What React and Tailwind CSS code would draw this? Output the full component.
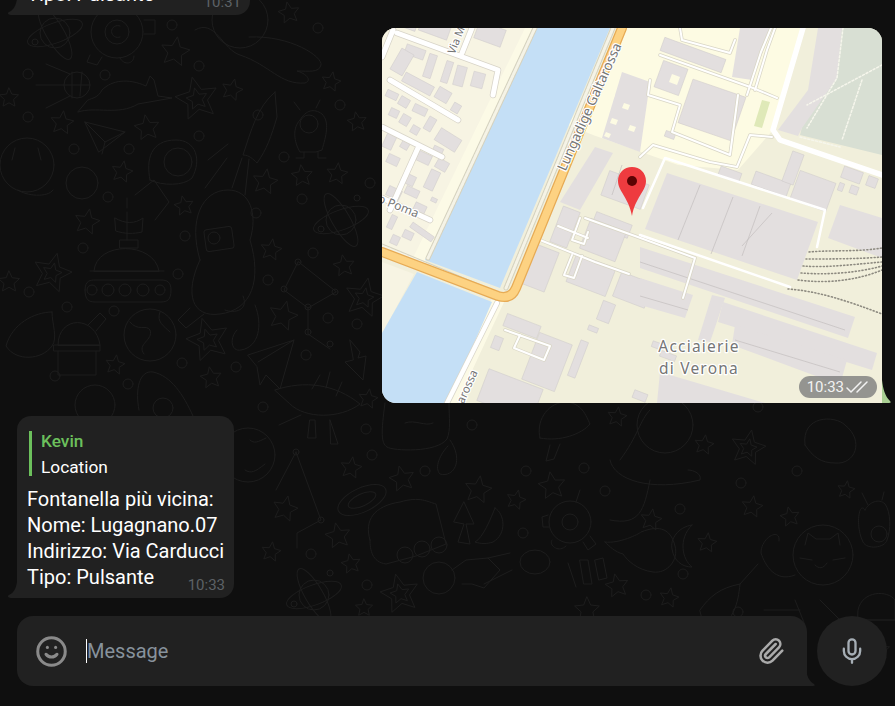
import { Mic, Paperclip, Smile } from 'lucide-react';

const starPts = (cx, cy, r, rot = 0) => {
  const pts = [];
  for (let i = 0; i < 10; i++) {
    const a = ((-90 + rot + i * 36) * Math.PI) / 180;
    const d = i % 2 === 0 ? r : r * 0.48;
    pts.push(`${(cx + d * Math.cos(a)).toFixed(1)},${(cy + d * Math.sin(a)).toFixed(1)}`);
  }
  return pts.join(' ');
};

// x, y, radius, rotation, double outline
const stars = [
  [175, 52, 15, 10], [197, 99, 22, -12, 1], [232, 90, 11, 15], [9, 98, 10, 0], [62, 123, 12, 8],
  [147, 128, 13, -8], [122, 172, 11, 12], [265, 182, 13, 10], [302, 176, 11, -5], [337, 174, 11, 8],
  [289, 13, 11, -10], [331, 82, 10, 12], [357, 122, 10, -8], [87, 222, 13, 12], [184, 206, 10, -10],
  [52, 273, 20, 15, 1], [9, 282, 11, 0], [271, 250, 11, 10], [344, 266, 11, -8], [364, 298, 20, 12, 1],
  [283, 316, 15, 15], [208, 340, 22, -15, 1], [115, 365, 10, 10], [211, 378, 11, -8], [368, 399, 10, 10],
  [351, 468, 11, 10], [285, 509, 13, 14], [402, 479, 13, -12], [478, 490, 14, 10], [516, 500, 10, 15],
  [552, 486, 14, -8], [617, 417, 10, 10], [338, 536, 13, -10], [271, 552, 10, 10], [351, 564, 10, -10],
  [400, 594, 20, -12, 1], [651, 520, 11, 10], [707, 543, 10, 8], [617, 586, 12, -10], [669, 598, 10, 12],
  [364, 608, 9, 0], [587, 610, 13, 0], [704, 445, 10, 10], [748, 448, 18, 12, 1],
  [752, 507, 11, 10], [790, 517, 10, -10], [846, 490, 9, 10], [880, 650, 10, 0],
];

const dots = [
  [172, 25], [199, 66], [105, 75], [28, 74], [28, 117], [199, 136], [129, 149], [74, 149], [258, 115],
  [284, 157], [340, 105], [318, 28], [370, 183], [108, 197], [83, 248], [29, 292], [67, 307], [114, 311],
  [185, 236], [178, 274], [256, 213], [302, 199], [268, 280], [313, 253], [328, 318], [357, 324], [306, 355],
  [236, 367], [182, 363], [55, 376], [128, 384], [263, 407], [366, 429], [372, 455], [472, 425], [425, 471],
  [526, 471], [584, 468], [605, 491], [680, 509], [523, 533], [311, 554], [367, 585], [683, 574], [646, 595],
  [741, 483], [797, 471], [738, 612], [758, 407],
];

const Atom = ({ x, y }) => (
  <g>
    <circle cx={x} cy={y} r="15" />
    <ellipse cx={x} cy={y} rx="29" ry="10" transform={`rotate(-20 ${x} ${y})`} />
    <ellipse cx={x} cy={y} rx="30" ry="9" transform={`rotate(60 ${x} ${y})`} />
    <circle cx={x - 20} cy={y + 9} r="3" />
    <circle cx={x + 16} cy={y - 22} r="3" />
  </g>
);

const Wallpaper = () => (
  <svg className="absolute inset-0" width="895" height="706" fill="none" stroke="#1d1d1d" strokeWidth="1" strokeLinejoin="round" strokeLinecap="round">
    {stars.map(([x, y, r, rot, dbl], i) => (
      <g key={i}>
        <polygon points={starPts(x, y, r, rot)} />
        {dbl && <polygon points={starPts(x, y, r * 0.5, rot)} />}
      </g>
    ))}
    {dots.map(([x, y], i) => (
      <circle key={i} cx={x} cy={y} r="5" />
    ))}
    <Atom x={55} y={33} />
    <Atom x={341} y={220} />
    <Atom x={314} y={595} />
    {/* eye creature top */}
    <circle cx="117" cy="32" r="26" />
    <circle cx="117" cy="32" r="12" />
    <path d="M120 26a6 6 0 1 0 0 11M144 20h11v14h-11M90 55l-3 7 10 3 5-8M120 58c4 8 14 6 14-2" />
    {/* sputnik */}
    <circle cx="77" cy="85" r="13" />
    <path d="M36 85h54M46 64l24 10M46 108l24-12M72 72v26M82 72l-2 24" />
    {/* cat, upper */}
    <circle cx="240" cy="20" r="28" />
    <path d="M195 30c20-12 28 20 45 25 30 10 40 30 65 28 8-3 0-10-8-12 12 0 22 2 24-6 2-8-30-30-72-28" />
    {/* glider */}
    <path d="M78 112c18-6 40 4 60-8l34-6-14-2-4-16-4-4-4 10c-18-8-34-6-44 4-4 8-10 8-14 10z" />
    {/* rocket */}
    <path d="M275 92l2 25c-6 20-10 32-20 46-4-4-8-8-14-8 8-24 14-48 32-63z" />
    <path d="M208 160l20-16M205 188l22-30M232 188l10-30M245 195l4-36" />
    {/* paper plane */}
    <path d="M85 122l40 10-26 20zM85 122l20 20 20-10M105 142l-3 12" />
    {/* alien */}
    <path d="M300 120c-8 8-6 22 0 32h16l6-2c4-14 8-28 0-36-8-6-16-4-22 6z" />
    <circle cx="309" cy="124" r="9" />
    <path d="M300 110l-6-8M316 108l4-8M304 152v6h-8M318 152v6h8" />
    {/* helmet */}
    <path d="M150 180c-4-20 0-40 26-40 20 0 26 20 16 38-8 8-30 8-42 2z" />
    <circle cx="178" cy="162" r="14" />
    {/* cat, left */}
    <circle cx="27" cy="165" r="27" />
    <path d="M15 148l-3 12M38 148l3 12M18 190c8 6 30 8 35 0" />
    <circle cx="82" cy="183" r="16" />
    {/* lander */}
    <path d="M94 271c2-30 60-30 65 0zM90 271h74M85 290c0-10 6-10 10-10h66c6 0 10 2 10 10 0 10-4 12-10 12H95c-6 0-10-2-10-12z" />
    <circle cx="92" cy="290" r="5" />
    <circle cx="108" cy="290" r="6" />
    <circle cx="125" cy="290" r="6" />
    <circle cx="143" cy="290" r="6" />
    <circle cx="160" cy="290" r="5" />
    <path d="M127 240v-28M115 218c10 6 20 6 28 0l-1 14c-8 2-18 2-26-1zM120 240h18v8h-18zM127 208v-10" />
    <path d="M135 195l19-15 15 22-14 18" />
    {/* fat cat with camera */}
    <path d="M200 260c-12-40 2-70 28-70 22 0 30 24 22 50 12 40 2 70-30 74-28 4-36-20-20-54z" />
    <rect x="205" y="228" width="28" height="22" rx="3" transform="rotate(-8 219 239)" />
    <circle cx="214" cy="238" r="6" />
    <path d="M190 308l-12 12 8 8 18-14M225 310c10 4 24 0 18-14M255 305c8 20 4 42-14 45-10 2-12-12-4-20" />
    {/* constellation */}
    <path d="M298 262l-14 28 24 18 28-16zM308 308v26l22 15" />
    <circle cx="298" cy="262" r="3" />
    <circle cx="284" cy="289" r="3" />
    <circle cx="308" cy="307" r="3" />
    <circle cx="335" cy="292" r="3" />
    <circle cx="308" cy="332" r="3" />
    <circle cx="330" cy="344" r="3" />
    {/* paper plane 2, arrow */}
    <path d="M248 355l46-15-14 49-14-14-6 10-3-18zM258 362l36-22M350 340l10 12-2 6 8-2-3 24-18-18 8-2z" />
    {/* ufo, observatory, earth */}
    <path d="M52 312c-18 0-40 12-46 34 10 16 36 14 46 0 6-8 0-22 0-34z" />
    <path d="M58 345c0-30 38-30 42 0zM54 345h46v6H54zM58 351v24h38v-24" />
    <path d="M88 325l12-12 6 6-10 12" />
    <circle cx="150" cy="335" r="26" />
    <path d="M130 322c8 10 16 2 20 8 4 10-14 14-6 24M160 312c-4 10 4 14 10 20" />
    {/* planet with ring, rocket */}
    <circle cx="95" cy="405" r="20" />
    <path d="M139 410c-4-20 0-40 14-38 18 4 30 22 40 44" />
    <circle cx="163" cy="408" r="10" />
    {/* ufo with legs */}
    <path d="M275 390c30-10 60-6 85 14-20 15-55 15-70 0zM320 375l-8 14M330 372l-4 16M342 382l-6 14" />
    <path d="M310 420h5l1 18h-8zM330 420l8 24h-7zM279 425l22-10" />
    {/* planet with eyes */}
    <circle cx="248" cy="455" r="27" />
    <path d="M250 440c4 4 8 2 16-2M245 470c6 4 10 2 20-6" />
    <circle cx="296" cy="452" r="3" />
    <circle cx="321" cy="520" r="3" />
    <path d="M296 452l25 68-24 13v15M296 452l-20 38" />
    {/* fat cat lower */}
    <path d="M385 403c-4 30-4 40 2 44 6 4 50 6 60-8 4-10 2-20 2-36" />
    <path d="M405 423c10-4 20 4 28 0M450 440c14 20 4 38-10 34-6-6 0-20 8-28" />
    {/* galaxy */}
    <ellipse cx="362" cy="500" rx="26" ry="12" transform="rotate(-25 362 500)" />
    <ellipse cx="362" cy="500" rx="15" ry="6" transform="rotate(-25 362 500)" />
    {/* truck */}
    <path d="M370 540c-6-20 4-34 30-38 20-6 28 0 36 2l10 40-30 12-30 8c-14-2-16-14-16-24z" />
    <circle cx="405" cy="555" r="8" />
    <circle cx="422" cy="549" r="8" />
    <circle cx="439" cy="545" r="8" />
    <path d="M464 502l10 22-8 0 4 20-12-2 6-18-10-2z" />
    <path d="M495 508c10 6 12 26-2 34-6 2-12 2-18 0 8-4 16-24 20-34z" />
    {/* spaceship */}
    <circle cx="439" cy="578" r="16" />
    <path d="M452 570l14-10 22-2 12 12-16 18-12-4h-10M488 558l22-5M484 584l28-14" />
    {/* cat lower right */}
    <circle cx="665" cy="425" r="28" />
    <path d="M620 460c18-24 20-40 30-50M610 460c4 20 40 32 90 20 2-6-6-10-12-10M610 520c30 6 34-10 40-40" />
    {/* ufo with hat */}
    <path d="M540 438c-4-16 6-34 24-36 18 0 22 14 26 22-8 10-30 18-50 14z" />
    <path d="M550 445l-4 16 8-2 6-15" />
    {/* eye bot lower */}
    <circle cx="570" cy="522" r="21" />
    <circle cx="570" cy="522" r="8" />
    <path d="M548 515l-6 2 1 10h6M590 536l6 8-8 6-5-8M552 540c-4 4 6 14 14 6M580 490l-4 12" />
    {/* comet, moons */}
    <path d="M605 542c14 2 34-8 36-10 20-8 30-2 34 14 4 14-8 28-22 26-16-2-26-12-30-18-8-2-14-8-18-12z" />
    <path d="M692 525c-14 2-22 14-20 24 2 12 10 18 20 18-10-8-14-28 0-42z" />
    <path d="M568 563l8 24M580 560h8l4 24h-8zM595 560l8-2 4 20-8 2z" />
    <ellipse cx="535" cy="562" rx="15" ry="12" />
    {/* cat in helmet, right */}
    <circle cx="823" cy="555" r="30" />
    <path d="M805 545l3-12 8 6h14l8-6 2 12M800 558l12 2M845 558l-12 2M815 565c4 4 8 4 12-2M795 575c-20 8-30-10-34-22 0-16 20-26 18-12M795 600l10 25M820 600l20 20M800 610h-36" />
    {/* alien right */}
    <path d="M865 510c-6-10-10 16-2 32 4 8 22 6 24-2 4-10 4-28-2-36-6-6-16-2-20 6z" />
    <circle cx="879" cy="534" r="8" />
    <path d="M868 505l-6-12M882 500l2-8" />
    {/* rocket lower right */}
    <path d="M700 610c10-14 20-22 40-26-2 20-6 34-22 46l-14-4zM740 584l18-20M706 625l-8 14" />
    {/* observatory right */}
    <path d="M858 610c4-20 30-20 37-10v20h-37zM856 620h39" />
    <path d="M805 445c-4-30 30-30 40-20 20 16 10 40-10 38-14 0-22-6-30-18z" />
  </svg>
);

const P = ({ d, f }) => <path d={d} fill={f} />;

// cx, cy, w, h, angle
const buildings = [
  [415, 52, 20, 10, 20], [430, 66, 8, 24, 18], [402, 62, 14, 24, 30], [447, 72, 7, 22, 18], [460, 76, 10, 20, 15],
  [478, 80, 12, 15, 15], [418, 84, 32, 10, 28], [443, 95, 14, 12, 30], [456, 108, 8, 9, 30], [392, 95, 12, 7, 25],
  [404, 102, 10, 9, 30], [420, 110, 14, 8, 25], [405, 120, 9, 10, 30], [394, 113, 9, 8, 25], [430, 124, 8, 14, 30],
  [448, 140, 24, 14, 32], [415, 130, 8, 8, 30], [390, 140, 10, 18, 25], [405, 145, 8, 8, 30], [438, 150, 10, 6, 25],
  [424, 158, 14, 10, 25], [442, 165, 12, 10, 30], [393, 160, 12, 9, 25],
  [410, 180, 10, 10, 25], [432, 180, 10, 20, 25], [412, 192, 14, 8, 25], [420, 208, 12, 8, 25], [394, 193, 14, 10, 25],
  [434, 200, 6, 4, 25], [392, 222, 6, 14, 25], [395, 240, 8, 9, 25], [408, 235, 10, 8, 25],
  [422, 232, 26, 6, 35], [410, 27, 12, 5, 20], [435, 28, 30, 15, 20], [490, 34, 28, 18, 20],
  [693, 55, 65, 14, 20], [671, 78, 26, 28, 20], [712, 110, 56, 46, 19], [852, 175, 20, 12, 20], [872, 182, 10, 10, 20],
  [813, 191, 38, 30, 20], [771, 184, 37, 14, 20], [793, 168, 12, 32, 20], [730, 174, 22, 9, 20], [841, 187, 5, 8, 20],
  [625, 190, 42, 26, 20], [612, 225, 38, 14, 21], [565, 227, 18, 38, 21], [603, 240, 38, 32, 21], [591, 275, 42, 30, 21],
  [540, 268, 25, 42, 21], [633, 290, 34, 26, 21], [606, 312, 13, 20, 21], [593, 329, 10, 5, 21], [522, 326, 36, 13, 21],
  [547, 362, 35, 50, 21], [578, 359, 8, 38, 21], [497, 343, 9, 13, 21], [510, 395, 58, 34, 21], [640, 396, 14, 8, 21],
  [670, 135, 10, 6, 20], [854, 190, 8, 8, 20], [656, 345, 8, 6, 20], [668, 356, 16, 6, 20],
];

const serviceRoads = [
  'M660 55l93 33 24 10',
  'M650 80l-2 15 32 10-8 27 58 23 8-60',
  'M640 157l13-12 57 17 27 5 13-32 22 2',
  'M680 28l2 12 48 13 5-13',
  'M755 90l12-40 8-22M747 95l14-43 10-24',
  'M585 218l50 18 60 22-12 40',
  'M540 240l55 22 34 12',
  'M572 255l-8 20 10 3 8-22M580 218l-8 22 12 4 4-12',
  'M505 330l45 16-6 14-30-12 6-13',
  'M558 226l30 12',
];

const MapImage = () => (
  <svg className="block" width="500" height="375" viewBox="382 28 500 375">
    <rect x="382" y="28" width="500" height="375" fill="#f1efdb" />
    <P d="M382 28h155L425 260l-43-10zM382 262l32 12-32 60z" f="#f7f4e3" />
    <P d="M525 28h14L425 262l-12-4zM505 300l-48 103h-16l50-103z" f="#fcfae6" />
    <P d="M625 28h178l-30 102-35 40-60-5-85-30-25-10z" f="#fdfbe3" />
    <P d="M840 28h42v127l-82-20 2-8 18-30 15-30z" f="#d8dfd3" />
    <P d="M818 28h24l-5 50-35 50-4 8-20-6 30-40z" f="#e3dfdf" />
    <P d="M537 28h73L500 288l-75-28z" f="#c4dff6" />
    <P d="M417 272l75 30-44 101h-66v-70z" f="#c4dff6" />

    {buildings.map(([x, y, w, h, a], i) => (
      <rect key={i} x={x - w / 2} y={y - h / 2} width={w} height={h} fill="#e3dfdf" stroke="#cfcbcb" strokeWidth="0.5" transform={`rotate(${a} ${x} ${y})`} />
    ))}
    <P d="M740 28h32l-20 52-20-3z" f="#e3dfdf" />
    <P d="M622 72l28 10-10 70-38-14z" f="#e3dfdf" />
    <P d="M595 147l18 6-33 57-20-8z" f="#e3dfdf" />
    <P d="M667 173l151 49-21 58-152-51z" f="#e3dfdf" />
    <P d="M840 205l42 13v40l-54-20z" f="#e3dfdf" />
    <P d="M640 247l215 70-7 21-208-70z" f="#e3dfdf" />
    <P d="M640 278l53 17-8 23-45-13z" f="#e3dfdf" />
    <P d="M712 295l13 3-15 44-12-2z" f="#e3dfdf" />
    <P d="M723 302l154 51-5 17-154-48z" f="#e3dfdf" />
    <P d="M735 325l112 35-7 25-108-40z" f="#e3dfdf" />
    <P d="M660 372l105 31H657z" f="#e3dfdf" />
    <P d="M610 93l5 2-3 6-5-2zM624 103l6 2-2 5-6-2zM612 118l6 2-2 5-6-2zM630 125l6 2-2 5-6-2zM606 132l5 2-2 4-5-2z" f="#fdfbe3" />
    <P d="M672 74l8 3-3 8-8-3z" f="#fdfbe3" />
    <P d="M762 100l8 2-8 26-8-2z" f="#dfe9b8" />

    <g fill="none" stroke="#bdb9b9" strokeWidth="0.6">
      <path d="M700 185l-22 55M733 197l-22 57M760 206l-18 50M742 246l30-33M622 165l-10 30M640 185l-6 18" />
      <path d="M640 262l205 68M640 296l48 14M735 340l105 32" />
    </g>

    <g fill="none" strokeLinecap="round" strokeLinejoin="round">
      <g stroke="#d9d6c6" strokeWidth="3.5">{serviceRoads.map((d) => <path key={d} d={d} />)}</g>
      <g stroke="#ffffff" strokeWidth="2">{serviceRoads.map((d) => <path key={d} d={d} />)}</g>
      <path d="M640 235l150 52M817 247l8-37-160-52-22 50" stroke="#ffffff" strokeWidth="2.5" />

      {/* left white streets */}
      <g stroke="#d8d4c8" strokeWidth="6.5">
        <path d="M397 33l101 37-5 25M390 80l68 40M382 127l60 30M418 148l-28 62M393 30l-11 27M472 28l-10 25M382 198l48 22" />
      </g>
      <g stroke="#ffffff" strokeWidth="5">
        <path d="M397 33l101 37-5 25M390 80l68 40M382 127l60 30M418 148l-28 62M393 30l-11 27M472 28l-10 25M382 198l48 22" />
      </g>
      <path d="M803 28l-30 102 7 10 102 35" stroke="#ffffff" strokeWidth="5.5" />

      {/* dotted banks */}
      <path d="M613 28L506 288M535 28L428 258M382 246l120 50" stroke="#d5d2bf" strokeWidth="5" />
      <path d="M613 28L506 288M535 28L428 258M382 246l120 50" stroke="#f5f3e6" strokeWidth="3" strokeDasharray="2 1.5" />

      {/* main road */}
      <path d="M497 303l-50 100" stroke="#d8d4c8" strokeWidth="6" />
      <path d="M497 303l-50 100" stroke="#ffffff" strokeWidth="4.5" />
      <path d="M622 28L516 288q-5 12-18 8L382 252" stroke="#e7ab55" strokeWidth="10" />
      <path d="M622 28L516 288q-5 12-18 8L382 252" stroke="#fdd282" strokeWidth="7.5" />

      {/* parking dots */}
      <g stroke="#8d8a80" strokeWidth="1.6" strokeDasharray="1 2.4">
        <path d="M809 252c20-2 50 0 73-4M806 259c22 0 52 0 76-2M803 266c24 2 54-2 79-4M801 273c26 2 56 0 81-7M798 280c30 4 60 0 84-10M788 289c30 2 60 12 94 25" />
      </g>
      {/* park paths */}
      <path d="M843 28l-6 50-30 50M882 65l-75 40M862 80l-20 60M800 137l40 10" stroke="#f6f6ec" strokeWidth="1.5" strokeDasharray="2 2" />
    </g>

    <g fontFamily="'Noto Sans', sans-serif" fill="#757575" stroke="#ffffff" strokeWidth="2.5" paintOrder="stroke" strokeLinejoin="round">
      <text x="590" y="111" fontSize="13.5" textAnchor="middle" transform="rotate(-66 590 107)">Lungadige Galtarossa</text>
      <text x="398" y="210" fontSize="12" textAnchor="middle" transform="rotate(22 398 207)">o Poma</text>
      <text x="468" y="390" fontSize="11.5" textAnchor="middle" transform="rotate(-66 468 387)">arossa</text>
      <text x="456" y="44" fontSize="11" textAnchor="middle" transform="rotate(-68 456 40)">Via M</text>
      <text x="699" y="352" fontSize="15.5" letterSpacing="1.2" textAnchor="middle">Acciaierie</text>
      <text x="699" y="374" fontSize="15.5" letterSpacing="1.2" textAnchor="middle">di Verona</text>
    </g>

    {/* pin */}
    <path d="M632 167c-8 0-14 6-14 14 0 10 11 17 14 35 3-18 14-25 14-35 0-8-6-14-14-14z" fill="#ee3b3f" />
    <circle cx="632" cy="181" r="5" fill="#5b0303" />
  </svg>
);

const Checks = () => (
  <svg width="30" height="14" viewBox="0 0 30 14" fill="none" stroke="#f2f2f2" strokeWidth="1.5" strokeLinecap="round" strokeLinejoin="round">
    <path d="M2 8l4 4L16 2M12 12L22 2" />
  </svg>
);

const TailLeft = () => (
  <svg className="absolute -left-[9px] bottom-0" width="12" height="16" viewBox="0 0 12 16">
    <path d="M12 0v16H3C0 16-1 14 1 13 6 11 8 6 9 0z" fill="#212121" />
  </svg>
);

const Bubble = ({ width, time, reply }) => (
  <div className={`relative self-start ml-[17px] whitespace-nowrap rounded-[14px] rounded-bl-none bg-[#212121] px-[10px] pb-[8px] pt-[15px] text-[20px] leading-[26px] text-white ${width}`}>
    {reply && (
      <div className="ml-[2px] mb-[10px] flex h-[45px] flex-col gap-[6px] border-l-[3px] border-[#6cc05c] pl-[9px] text-[17.3px] leading-[20px]">
        <div className="font-medium text-[#6cc05c]">Kevin</div>
        <div>Location</div>
      </div>
    )}
    <div>Fontanella più vicina:</div>
    <div>Nome: Lugagnano.07</div>
    <div>Indirizzo: Via Carducci</div>
    <div>Tipo: Pulsante</div>
    <span className="absolute bottom-[3px] right-[9px] text-[15px] leading-[20px] text-[#5d6266]">{time}</span>
    <TailLeft />
  </div>
);

const App = () => (
  <div className="relative h-[706px] w-[895px] overflow-hidden bg-[#0f0f0f] font-['Roboto',sans-serif]">
    <Wallpaper />
    <div className="relative flex h-full flex-col justify-end pb-[20px]">
      <Bubble width="w-[233px]" time="10:31" />

      <div className="relative ml-[382px] mt-[13px] w-[500px]">
        <div className="overflow-hidden rounded-[14px] rounded-br-none">
          <MapImage />
        </div>
        <div className="absolute bottom-[5px] right-[5px] flex h-[22px] items-center gap-[1px] rounded-full bg-[#7d7d7d]/80 pl-[8px] pr-[2px] text-[15px] text-[#f2f2f2]">
          10:33
          <Checks />
        </div>
        <svg className="absolute -right-[9px] bottom-0" width="9" height="23" viewBox="0 0 9 23">
          <path d="M0 0c1 9 3 16 8 21 1 1 1 2-1 2H0z" fill="#a9cf93" />
        </svg>
      </div>

      <div className="mt-[13px]">
        <Bubble width="w-[217px]" time="10:33" reply />
      </div>

      <div className="mt-[18px] flex items-stretch gap-[10px] pl-[17px]">
        <div className="relative flex h-[70px] w-[790px] items-center rounded-[16px] rounded-br-none bg-[#212121] pl-[18px] pr-[22px]">
          <Smile size={33} strokeWidth={2.2} className="text-[#8a8a8a]" />
          <div className="ml-[18px] h-[24px] w-px bg-white" />
          <div className="flex-1 text-[20px] text-[#87929c]">Message</div>
          <Paperclip size={28} strokeWidth={2.2} className="text-[#aaaaaa]" />
          <svg className="absolute -right-[9px] bottom-0" width="10" height="16" viewBox="0 0 10 16">
            <path d="M0 0c1 6 3 11 8 14 1 1 1 2-1 2H0z" fill="#212121" />
          </svg>
        </div>
        <div className="flex h-[70px] w-[70px] items-center justify-center rounded-full bg-[#212121]">
          <Mic size={28} strokeWidth={2} className="text-[#a6aeb5]" />
        </div>
      </div>
    </div>
  </div>
);

export default App;
